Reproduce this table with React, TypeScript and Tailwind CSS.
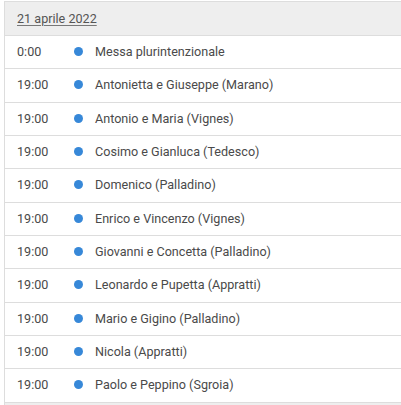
const eventi = [
  { ora: "0:00", titolo: "Messa plurintenzionale" },
  { ora: "19:00", titolo: "Antonietta e Giuseppe (Marano)" },
  { ora: "19:00", titolo: "Antonio e Maria (Vignes)" },
  { ora: "19:00", titolo: "Cosimo e Gianluca (Tedesco)" },
  { ora: "19:00", titolo: "Domenico (Palladino)" },
  { ora: "19:00", titolo: "Enrico e Vincenzo (Vignes)" },
  { ora: "19:00", titolo: "Giovanni e Concetta (Palladino)" },
  { ora: "19:00", titolo: "Leonardo e Pupetta (Appratti)" },
  { ora: "19:00", titolo: "Mario e Gigino (Palladino)" },
  { ora: "19:00", titolo: "Nicola (Appratti)" },
  { ora: "19:00", titolo: "Paolo e Peppino (Sgroia)" },
];

export default function App() {
  return (
    <div className="h-[405px] w-[401px] overflow-hidden bg-white font-['Roboto',sans-serif] text-[12.6px] leading-[17px]">
      <div className="ml-[4px] mt-[1px] border-l border-t border-[#dddddd]">
        <div className="flex h-[34px] items-center border-b border-[#dddddd] bg-[#eeeeee] pb-[1px] pl-[12px]">
          <span className="text-[#555555] underline decoration-[#777777] underline-offset-2">21 aprile 2022</span>
        </div>
        {eventi.map((e, i) => (
          <div key={i} className="flex h-[33.34px] items-center border-b border-[#dddddd] pb-[1px] text-[#4a4a4a]">
            <span className="w-[59px] pl-[12px]">{e.ora}</span>
            <span className="ml-[10px] h-[9px] w-[9px] rounded-full bg-[#3788d8]" />
            <span className="ml-[12px]">{e.titolo}</span>
          </div>
        ))}
        <div className="h-[34px] bg-[#eeeeee]" />
      </div>
    </div>
  );
}
